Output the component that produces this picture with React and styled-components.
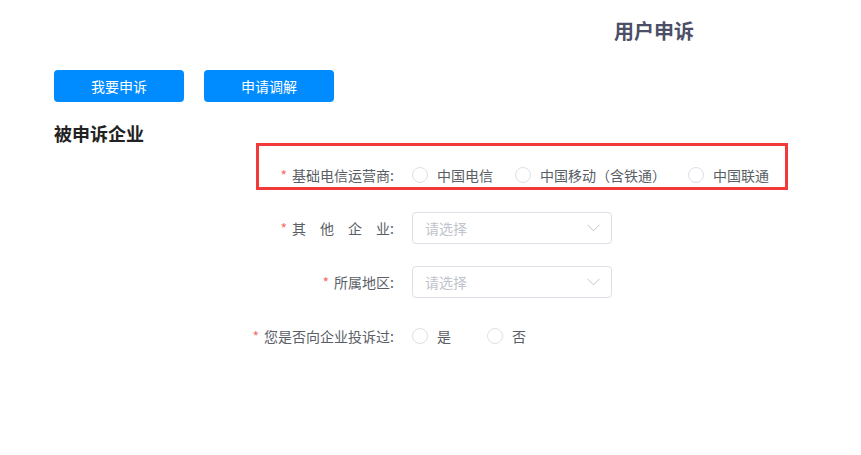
import styled, { createGlobalStyle } from "styled-components"

const GlobalStyle = createGlobalStyle`
    html, body {
        margin: 0;
        padding: 0;
        background: #fff;
        font-family: "Noto Sans CJK SC", "Liberation Sans", sans-serif;
    }
`;

const Page = styled.div`
    width: 861px;
    height: 455px;
    background: #fff;
    overflow: hidden;
`;

const Header = styled.div`
    display: flex;
    padding: 17px 0 0 614px;
    height: 28px;
    font-size: 20px;
    font-weight: 700;
    line-height: 28px;
    color: #4b4f68;
`;

const Toolbar = styled.div`
    display: flex;
    gap: 20px;
    margin-top: 25px;
    padding-left: 54px;
`;

const Button = styled.button`
    width: 130px;
    height: 32px;
    padding: 0;
    border: none;
    border-radius: 4px;
    background: #008cff;
    color: #fff;
    font-family: inherit;
    font-size: 14px;
    cursor: pointer;
`;

const SectionTitle = styled.h3`
    margin: 22px 0 0;
    padding-left: 54px;
    height: 19px;
    font-size: 18px;
    font-weight: 700;
    line-height: 19px;
    color: #222;
`;

const Form = styled.div`
    display: flex;
    flex-direction: column;
    gap: 22px;
`;

const Highlight = styled.div`
    width: 532px;
    height: 47px;
    box-sizing: border-box;
    margin-left: 256px;
    padding-top: 17px;
    border: 3px solid #f23a3a;
`;

const Item = styled.div`
    display: flex;
    align-items: center;
    height: ${p => p.$height || 32}px;
`;

const Label = styled.div`
    width: ${p => p.$width}px;
    box-sizing: border-box;
    padding-right: 18px;
    text-align: right;
    font-size: 14px;
    color: #5a5e66;
    white-space: nowrap;

    &::before {
        content: "*";
        color: #f56c6c;
        margin-right: 5px;
    }
`;

const RadioGroup = styled.div`
    display: flex;
    align-items: center;
    gap: ${p => p.$gap}px;
`;

const Radio = styled.label`
    display: flex;
    align-items: center;
    gap: 9px;
    font-size: 14px;
    color: #5a5e66;
    cursor: pointer;

    & span.dot {
        width: 14px;
        height: 14px;
        border: 1px solid #dcdfe6;
        border-radius: 50%;
        background: #fff;
    }
`;

const Select = styled.div`
    display: flex;
    align-items: center;
    justify-content: space-between;
    width: 200px;
    height: 32px;
    box-sizing: border-box;
    padding: 0 11px 0 12px;
    border: 1px solid #dcdfe6;
    border-radius: 4px;
    font-size: 14px;
    color: #c0c4cc;
`;

function Chevron() {
    return (
        <svg width="13" height="8" viewBox="0 0 13 8" fill="none">
            <polyline points="0.5,0.8 6.5,6.8 12.5,0.8" stroke="#c0c4cc" strokeWidth="1" />
        </svg>
    )
}

function Radios({ options, gap }) {
    return (
        <RadioGroup $gap={gap}>
            {options.map(o => (
                <Radio key={o}>
                    <span className="dot" />
                    {o}
                </Radio>
            ))}
        </RadioGroup>
    )
}

export default function App() {
    return (
        <Page>
            <GlobalStyle />
            <Header>用户申诉</Header>
            <Toolbar>
                <Button>我要申诉</Button>
                <Button>申请调解</Button>
            </Toolbar>
            <SectionTitle>被申诉企业</SectionTitle>
            <Form>
                <Highlight>
                    <Item $height={24}>
                        <Label $width={153}>基础电信运营商:</Label>
                        <Radios gap={22} options={["中国电信", "中国移动（含铁通）", "中国联通"]} />
                    </Item>
                </Highlight>
                <Item>
                    <Label $width={412}>其　他　企　业:</Label>
                    <Select>请选择<Chevron /></Select>
                </Item>
                <Item>
                    <Label $width={412}>所属地区:</Label>
                    <Select>请选择<Chevron /></Select>
                </Item>
                <Item>
                    <Label $width={412}>您是否向企业投诉过:</Label>
                    <Radios gap={36} options={["是", "否"]} />
                </Item>
            </Form>
        </Page>
    )
}
